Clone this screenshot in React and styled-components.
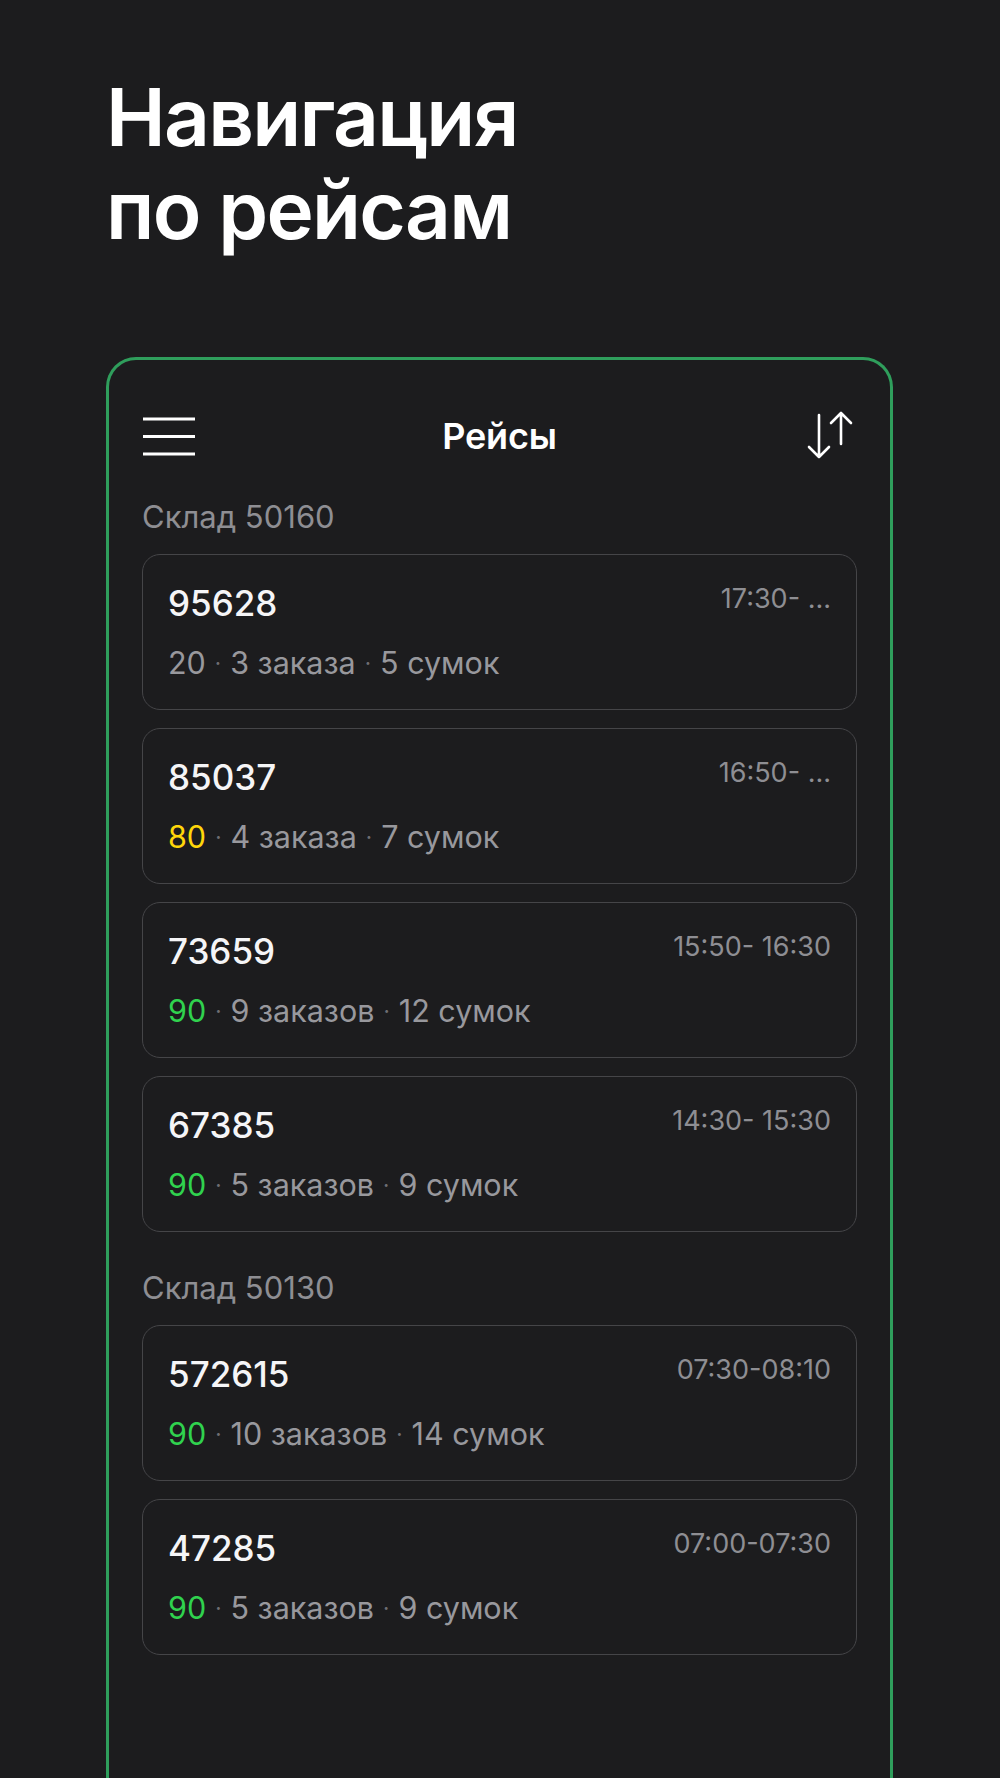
import React from "react";
import styled, { createGlobalStyle } from "styled-components";

const Global = createGlobalStyle`
  html, body {
    margin: 0;
    padding: 0;
    background: #1c1c1e;
    overflow: hidden;
  }
  body {
    font-family: Inter, "Noto Sans", "Liberation Sans", sans-serif;
    color: #fff;
  }
`;

const Page = styled.div`
  width: 1000px;
  height: 1778px;
  box-sizing: border-box;
  padding: 70px 107px 0 106px;
  background: #1c1c1e;
  overflow: hidden;
`;

const Title = styled.h1`
  margin: 0 0 101px 0;
  font-size: 80px;
  line-height: 93px;
  font-weight: 600;
  letter-spacing: -1.7px;
  color: #ffffff;
`;

const Frame = styled.section`
  box-sizing: border-box;
  width: 787px;
  min-height: 1500px;
  border: 3px solid #2f9e5c;
  border-bottom: none;
  border-radius: 30px 30px 0 0;
  padding: 53px 33px 0;
  background: #1c1c1e;
`;

const Header = styled.header`
  height: 46px;
  display: flex;
  align-items: center;
  justify-content: space-between;
`;

const HeaderTitle = styled.h2`
  margin: 0;
  font-size: 36px;
  font-weight: 600;
  color: #fff;
  letter-spacing: -0.2px;
`;

const IconSlot = styled.div`
  width: 54px;
  height: 46px;
  display: flex;
  align-items: center;
  justify-content: ${(p) => (p.$right ? "flex-end" : "flex-start")};
`;

const Section = styled.div`
  margin-top: 41px;
  display: flex;
  flex-direction: column;

  & + & {
    margin-top: 39px;
  }
`;

const SectionLabel = styled.div`
  font-size: 31px;
  line-height: 34px;
  color: #8e8e93;
  margin-bottom: 20px;
`;

const List = styled.div`
  display: flex;
  flex-direction: column;
  gap: 18px;
`;

const Card = styled.div`
  box-sizing: border-box;
  border: 1.5px solid #454548;
  border-radius: 18px;
  background: #1c1c1e;
  padding: 28px 25px 28px;
  display: flex;
  flex-direction: column;
  gap: 22px;
`;

const CardTop = styled.div`
  display: flex;
  justify-content: space-between;
  align-items: flex-start;
`;

const TripNumber = styled.div`
  font-size: 35px;
  line-height: 40px;
  font-weight: 500;
  color: #f5f5f7;
`;

const Time = styled.div`
  font-size: 27px;
  line-height: 30px;
  color: #8e8e93;
  margin-top: 1px;
`;

const Meta = styled.div`
  font-size: 30.5px;
  line-height: 36px;
  color: #98989d;
`;

const Score = styled.span`
  color: ${(p) =>
    p.$level === "yellow" ? "#ffd60a" : p.$level === "green" ? "#30d24e" : "#98989d"};
`;

const Dot = styled.span`
  color: #6e6e73;
  margin: 0 9px;
  font-size: 22px;
  vertical-align: 3px;
`;

const MenuIcon = () => (
  <svg width="54" height="46" viewBox="0 0 54 46" fill="none">
    <path d="M1 6H53M1 23.5H53M1 41H53" stroke="#fff" strokeWidth="3" />
  </svg>
);

const SortIcon = () => (
  <svg width="54" height="50" viewBox="0 0 54 50" fill="none">
    <path
      d="M16 4V46M6 36L16 46L26 36M38 33V2M28 12L38 2L48 12"
      stroke="#fff"
      strokeWidth="2.6"
      strokeLinecap="round"
      strokeLinejoin="round"
    />
  </svg>
);

const data = [
  {
    label: "Склад 50160",
    trips: [
      { id: "95628", time: "17:30- ...", score: "20", level: "gray", orders: "3 заказа", bags: "5 сумок" },
      { id: "85037", time: "16:50- ...", score: "80", level: "yellow", orders: "4 заказа", bags: "7 сумок" },
      { id: "73659", time: "15:50- 16:30", score: "90", level: "green", orders: "9 заказов", bags: "12 сумок" },
      { id: "67385", time: "14:30- 15:30", score: "90", level: "green", orders: "5 заказов", bags: "9 сумок" },
    ],
  },
  {
    label: "Склад 50130",
    trips: [
      { id: "572615", time: "07:30-08:10", score: "90", level: "green", orders: "10 заказов", bags: "14 сумок" },
      { id: "47285", time: "07:00-07:30", score: "90", level: "green", orders: "5 заказов", bags: "9 сумок" },
    ],
  },
];

export default function App() {
  return (
    <>
      <Global />
      <Page>
        <Title>
          Навигация
          <br />
          по рейсам
        </Title>
        <Frame>
          <Header>
            <IconSlot>
              <MenuIcon />
            </IconSlot>
            <HeaderTitle>Рейсы</HeaderTitle>
            <IconSlot $right>
              <SortIcon />
            </IconSlot>
          </Header>
          {data.map((s) => (
            <Section key={s.label}>
              <SectionLabel>{s.label}</SectionLabel>
              <List>
                {s.trips.map((t) => (
                  <Card key={t.id}>
                    <CardTop>
                      <TripNumber>{t.id}</TripNumber>
                      <Time>{t.time}</Time>
                    </CardTop>
                    <Meta>
                      <Score $level={t.level}>{t.score}</Score>
                      <Dot>·</Dot>
                      {t.orders}
                      <Dot>·</Dot>
                      {t.bags}
                    </Meta>
                  </Card>
                ))}
              </List>
            </Section>
          ))}
        </Frame>
      </Page>
    </>
  );
}
